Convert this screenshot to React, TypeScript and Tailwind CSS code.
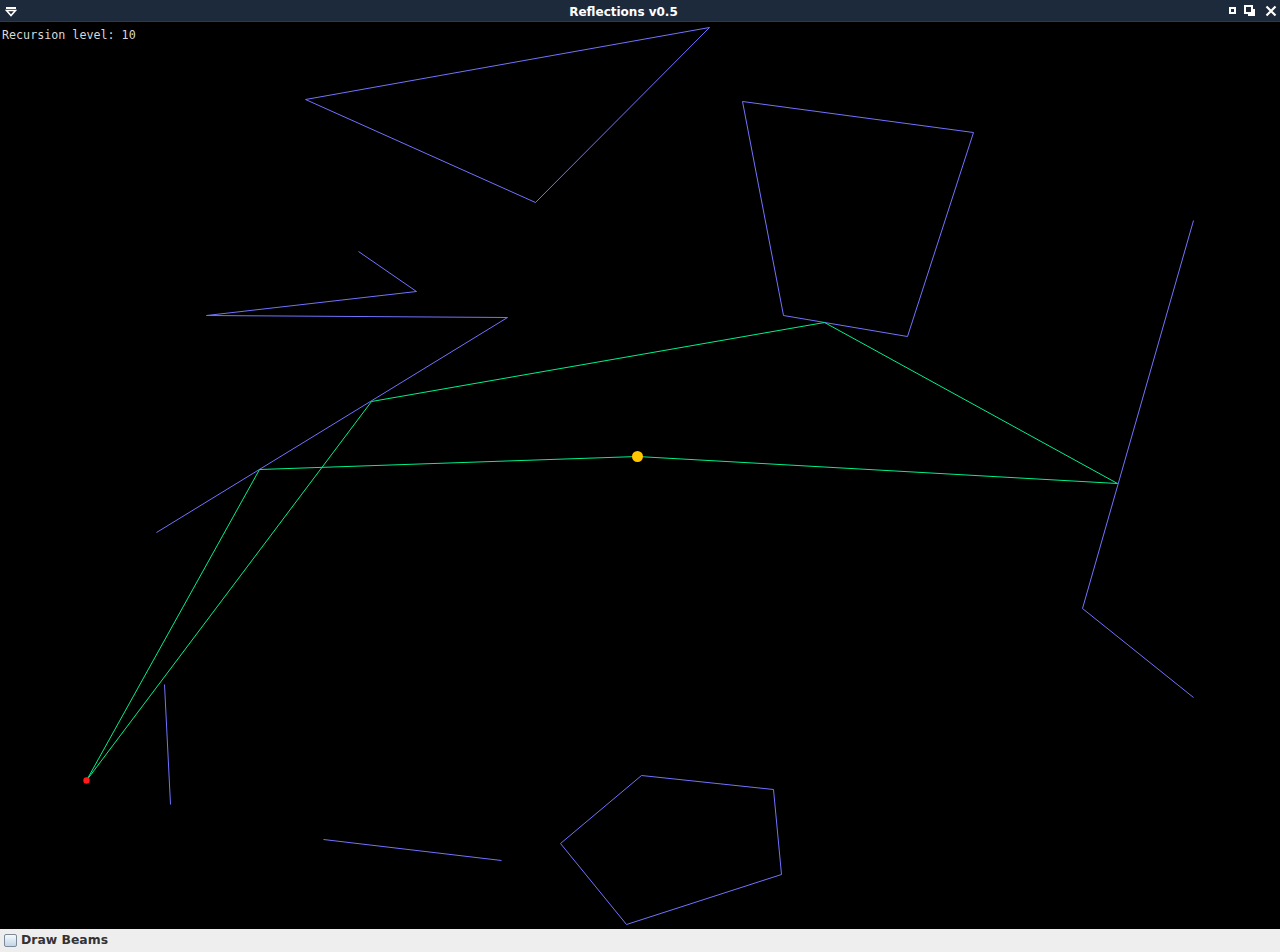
import React from 'react';

type Pt = [number, number];

const mirrors: { pts: Pt[]; closed: boolean }[] = [
  { pts: [[305, 99], [709, 27], [535, 202]], closed: true },
  { pts: [[742, 101], [973, 132], [907, 336], [783, 315]], closed: true },
  { pts: [[358, 251], [416, 291], [206, 315], [507, 317], [156, 532]], closed: false },
  { pts: [[1193, 220], [1082, 608], [1193, 697]], closed: false },
  { pts: [[164, 684], [170, 804]], closed: false },
  { pts: [[323, 839], [501, 860]], closed: false },
  { pts: [[641, 775], [773, 789], [781, 874], [626, 924], [560, 843]], closed: true },
];

const beams: Pt[][] = [
  [[637, 456], [259, 469], [86, 780]],
  [[637, 456], [1117, 483], [824, 322], [371, 401], [86, 780]],
];

const toPoints = (pts: Pt[]) => pts.map(([x, y]) => `${x + 0.5},${y + 0.5}`).join(' ');

function TitleBar() {
  return (
    <div className="h-[22px] bg-[#1d2a3b] flex items-center pl-1 border-b border-[#2c3a4c]">
      <svg width="12" height="12" viewBox="0 0 12 12" className="ml-[1px]">
        <rect x="1" y="2" width="10" height="2" fill="#fff" />
        <path d="M1.5 5.5 L10.5 5.5 L6 10.5 Z" fill="none" stroke="#fff" strokeWidth="1.6" />
      </svg>
      <div className="flex-1 text-center text-white font-bold text-[12px] pt-[2px] font-['DejaVu_Sans',sans-serif]">
        Reflections v0.5
      </div>
      <div className="flex items-center gap-[9px] pr-[3px]">
        <div className="w-[5px] h-[5px] border border-white outline outline-1 outline-white" />
        <svg width="12" height="12" viewBox="0 0 12 12">
          <rect x="1" y="1" width="7" height="7" fill="none" stroke="#fff" strokeWidth="2" />
          <path d="M10 4 V10 H4" fill="none" stroke="#fff" strokeWidth="2" />
        </svg>
        <svg width="12" height="12" viewBox="0 0 12 12">
          <path d="M1.5 1.5 L10.5 10.5 M10.5 1.5 L1.5 10.5" stroke="#fff" strokeWidth="2.2" />
        </svg>
      </div>
    </div>
  );
}

function Scene() {
  return (
    <div className="relative h-[907px] bg-black overflow-hidden">
      <svg width="1280" height="907" viewBox="0 22 1280 907" className="block">
        {mirrors.map((m, i) =>
          m.closed ? (
            <polygon key={i} points={toPoints(m.pts)} fill="none" stroke="#7272ff" strokeWidth="1" />
          ) : (
            <polyline key={i} points={toPoints(m.pts)} fill="none" stroke="#7272ff" strokeWidth="1" />
          )
        )}
        {beams.map((b, i) => (
          <polyline key={i} points={toPoints(b)} fill="none" stroke="#00f08c" strokeWidth="1" />
        ))}
        <circle cx="637.5" cy="456.5" r="5.5" fill="#ffc800" />
        <circle cx="86.5" cy="780.5" r="3.2" fill="#ff1a1a" />
      </svg>
      <div className="absolute left-[2px] top-[8px] text-[11.7px] leading-none text-[#d8d8d8] font-['DejaVu_Sans_Mono',monospace]">
        Recursion level: 10
      </div>
    </div>
  );
}

function Footer() {
  return (
    <div className="h-[23px] bg-[#eeeeee] flex items-center pl-[4px] gap-[4px]">
      <div className="w-[13px] h-[13px] border border-[#7a8a99] rounded-[2px] bg-gradient-to-b from-[#f6f9fc] to-[#c4d5e6]" />
      <span className="text-[12.4px] font-bold text-[#333333] font-['DejaVu_Sans',sans-serif]">Draw Beams</span>
    </div>
  );
}

export default function App() {
  return (
    <div className="w-[1280px] h-[952px] flex flex-col bg-black">
      <TitleBar />
      <Scene />
      <Footer />
    </div>
  );
}
